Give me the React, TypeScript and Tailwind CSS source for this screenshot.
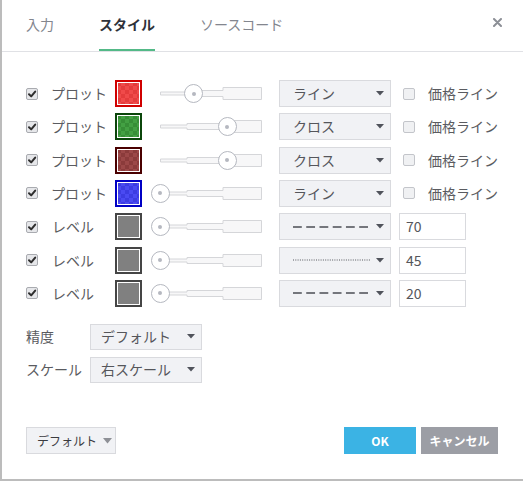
import React from "react";

const FONT = "font-['Noto_Sans_CJK_JP','Noto_Sans',sans-serif]";

function Check({ on }: { on: boolean }) {
  return on ? (
    <span className="flex h-[12px] w-[12px] items-center justify-center rounded-[2px] border border-[#a9abb0] bg-[#e6e7ea]">
      <svg width="10" height="10" viewBox="0 0 10 10">
        <path d="M2 5.2 L4.2 7.4 L8.2 2.6" fill="none" stroke="#2e2e2e" strokeWidth="2" strokeLinecap="round" strokeLinejoin="round" />
      </svg>
    </span>
  ) : (
    <span className="block h-[12px] w-[12px] rounded-[2px] border border-[#c3c5ca] bg-[#f0f1f3]" />
  );
}

function Arrow() {
  return (
    <svg width="8" height="5" viewBox="0 0 8 5" className="shrink-0">
      <path d="M0 0 H8 L4 4.5 Z" fill="#50535b" />
    </svg>
  );
}

function Slider({ pos }: { pos: number }) {
  return (
    <div className="relative h-[27px] w-[112px] shrink-0">
      <svg width="102" height="27" viewBox="0 0 102 27" className="absolute left-[10px] top-0">
        <path
          d="M0.5 12 H27 V10.5 H63 V7.5 H101.5 V19.5 H63 V16.5 H27 V15 H0.5 Z"
          fill="#f7f7f8"
          stroke="#d5d6d9"
          strokeWidth="1"
        />
      </svg>
      <div
        className="absolute top-[4px] flex h-[19px] w-[19px] items-center justify-center rounded-full border border-[#b5b8c0] bg-white"
        style={{ left: 10 + pos - 9.5 }}
      >
        <span className="block h-[4px] w-[4px] rounded-full bg-[#b5b8c0]" />
      </div>
    </div>
  );
}

function Swatch({ kind }: { kind: string }) {
  const cls: Record<string, string> = {
    red: "border-[#d00000] bg-[image:repeating-conic-gradient(#f04a4a_0%_25%,#e43c3c_0%_50%)]",
    green: "border-[#0b460b] bg-[image:repeating-conic-gradient(#43a043_0%_25%,#378e37_0%_50%)]",
    maroon: "border-[#4a0000] bg-[image:repeating-conic-gradient(#9c4848_0%_25%,#8b3b3b_0%_50%)]",
    blue: "border-[#0000c4] bg-[image:repeating-conic-gradient(#4a4af2_0%_25%,#3c3ce2_0%_50%)]",
    gray: "border-[#454545] bg-[#808080]",
  };
  return (
    <div className={`h-[27px] w-[27px] shrink-0 border-2 ${cls[kind]} bg-[length:8px_8px] shadow-[inset_0_0_0_1px_#ffffff]`} />
  );
}

function Select({ children, w, h = 27, pl = 13 }: { children: React.ReactNode; w: string; h?: number; pl?: number }) {
  return (
    <div
      className={`flex ${w} ${h === 27 ? "h-[27px]" : "h-[26px]"} ${pl === 13 ? "pl-[13px]" : "pl-[10px]"} shrink-0 items-center justify-between border border-[#d9dade] bg-[#f1f2f5] pr-[6px] text-[14px] text-[#55565b]`}
    >
      <div className="flex items-center">{children}</div>
      <Arrow />
    </div>
  );
}

function Dashed() {
  return (
    <svg width="75" height="2" viewBox="0 0 75 2">
      <line x1="0" y1="1" x2="75" y2="1" stroke="#74767c" strokeWidth="2" strokeDasharray="8.8 4.44" />
    </svg>
  );
}

function Dotted() {
  return (
    <svg width="78" height="2" viewBox="0 0 78 2">
      <line x1="0" y1="1" x2="78" y2="1" stroke="#55575d" strokeWidth="1" strokeDasharray="1 1.3" />
    </svg>
  );
}

const plots = [
  { color: "red", pos: 33.5, type: "ライン" },
  { color: "green", pos: 67, type: "クロス" },
  { color: "maroon", pos: 67, type: "クロス" },
  { color: "blue", pos: 0, type: "ライン" },
];

const levels = [
  { val: "70", dotted: false },
  { val: "45", dotted: true },
  { val: "20", dotted: false },
];

export default function App() {
  return (
    <div className={`${FONT} flex h-[481px] w-[523px] flex-col border-b-2 border-l-2 border-[#bcbcbc] bg-white`}>
      <div className="flex h-[52px] shrink-0 border-b border-[#e0e1e5] pl-[24px] pr-[21px]">
        <div className="flex h-[51px] gap-[45px]">
          <div className="flex h-full items-center border-b-2 border-transparent text-[14px] text-[#83868e]">入力</div>
          <div className="flex h-full items-center border-b-2 border-[#53b987] text-[14px] font-bold text-[#2f323a]">スタイル</div>
          <div className="flex h-full items-center border-b-2 border-transparent text-[14px] text-[#83868e]">ソースコード</div>
        </div>
        <div className="ml-auto mt-[18px]">
          <svg width="9" height="9" viewBox="0 0 9 9">
            <path d="M1 1 L8 8 M8 1 L1 8" stroke="#8c8f96" strokeWidth="2" strokeLinecap="round" />
          </svg>
        </div>
      </div>

      <div className="flex flex-col gap-[6.33px] pl-[24px] pt-[28px]">
        {plots.map((p, i) => (
          <div key={i} className="flex h-[27px] items-center">
            <div className="w-[25px] shrink-0">
              <Check on />
            </div>
            <div className="w-[64px] shrink-0 text-[14px] text-[#5a5b60]">プロット</div>
            <Swatch kind={p.color} />
            <div className="ml-[8px]">
              <Slider pos={p.pos} />
            </div>
            <div className="ml-[17px]">
              <Select w="w-[112px]">{p.type}</Select>
            </div>
            <div className="ml-[12px] w-[25px] shrink-0">
              <Check on={false} />
            </div>
            <div className="text-[14px] text-[#5a5b60]">価格ライン</div>
          </div>
        ))}
        {levels.map((l, i) => (
          <div key={i} className="flex h-[27px] items-center">
            <div className="w-[25px] shrink-0">
              <Check on />
            </div>
            <div className="w-[64px] shrink-0 pl-[1px] text-[14px] text-[#5a5b60]">レベル</div>
            <Swatch kind="gray" />
            <div className="ml-[8px]">
              <Slider pos={0} />
            </div>
            <div className="ml-[17px]">
              <Select w="w-[112px]">{l.dotted ? <Dotted /> : <Dashed />}</Select>
            </div>
            <div className="ml-[8px] flex h-[27px] w-[67px] items-center border border-[#d9dade] bg-white pl-[6px] text-[14px] text-[#55565b]">
              {l.val}
            </div>
          </div>
        ))}
      </div>

      <div className="mt-[17px] flex flex-col gap-[7px] pl-[24px]">
        <div className="flex h-[26px] items-center">
          <div className="w-[64px] text-[14px] text-[#5a5b60]">精度</div>
          <Select w="w-[112px]" h={26} pl={10}>デフォルト</Select>
        </div>
        <div className="flex h-[26px] items-center">
          <div className="w-[64px] text-[14px] text-[#5a5b60]">スケール</div>
          <Select w="w-[112px]" h={26} pl={10}>右スケール</Select>
        </div>
      </div>

      <div className="mt-auto flex items-center pb-[25px] pl-[24px] pr-[25px]">
        <div className="flex h-[27px] w-[90px] items-center gap-[6px] border border-[#d9dade] bg-[#f1f2f5] pl-[10px] text-[12px] text-[#3a3b3f]">
          <span>デフォルト</span>
          <svg width="9" height="6" viewBox="0 0 9 6">
            <path d="M0 0 H9 L4.5 5.5 Z" fill="#8e9096" />
          </svg>
        </div>
        <div className="ml-auto flex h-[27px] w-[72px] items-center justify-center bg-[#3bb3e4] text-[12px] font-bold text-white">OK</div>
        <div className="ml-[5px] flex h-[27px] w-[77px] items-center justify-center bg-[#9c9ea5] text-[12px] font-bold text-white">キャンセル</div>
      </div>
    </div>
  );
}
